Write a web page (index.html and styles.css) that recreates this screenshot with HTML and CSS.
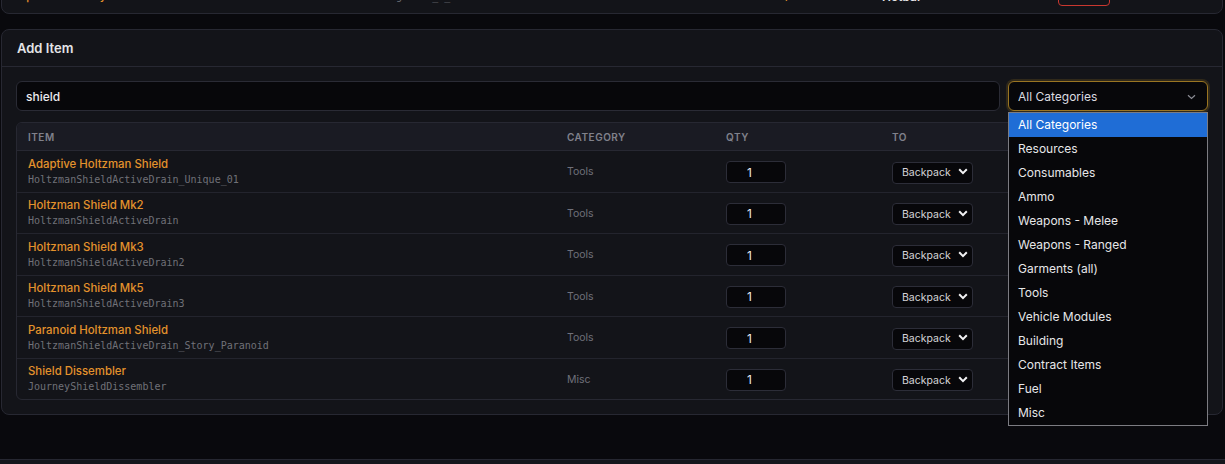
FILE: index.html
```html
<!DOCTYPE html>
<html lang="en">
<head>
    <meta charset="UTF-8">
    <meta name="viewport" content="width=device-width, initial-scale=1.0">
    <title>Inventory Editor</title>
    <link rel="stylesheet" href="styles.css">
</head>
<body>

<div class="page">
    <!-- Previous section (scrolled mostly out of view) -->
    <section class="card prev-card">
        <div class="prev-row">
            <span class="item-name">Improved Battery</span>
            <span class="item-code">RechargePack_M_Standard</span>
            <span class="prev-qty">1</span>
            <span class="prev-slot">Hotbar</span>
            <button class="btn-remove">Remove</button>
        </div>
    </section>

    <section class="card add-card">
        <div class="card-header">Add Item</div>
        <div class="card-body">
            <div class="search-row">
                <input type="text" class="search" value="shield">
                <div class="cat-select">
                    <select class="cat-input">
                        <option>All Categories</option>
                    </select>
                    <svg class="cat-chevron" width="9" height="6" viewBox="0 0 9 6">
                        <path d="M1 1.2l3.5 3.3 3.5-3.3" fill="none" stroke="#8b8c94" stroke-width="1.2"/>
                    </svg>
                    <!-- open dropdown list -->
                    <ul class="cat-list">
                        <li class="selected">All Categories</li>
                        <li>Resources</li>
                        <li>Consumables</li>
                        <li>Ammo</li>
                        <li>Weapons - Melee</li>
                        <li>Weapons - Ranged</li>
                        <li>Garments (all)</li>
                        <li>Tools</li>
                        <li>Vehicle Modules</li>
                        <li>Building</li>
                        <li>Contract Items</li>
                        <li>Fuel</li>
                        <li>Misc</li>
                    </ul>
                </div>
            </div>

            <div class="table-wrap">
                <table class="items">
                    <colgroup>
                        <col class="col-item">
                        <col class="col-cat">
                        <col class="col-qty">
                        <col>
                    </colgroup>
                    <thead>
                        <tr>
                            <th>Item</th>
                            <th>Category</th>
                            <th>Qty</th>
                            <th>To</th>
                        </tr>
                    </thead>
                    <tbody>
                        <tr>
                            <td><div class="item-name">Adaptive Holtzman Shield</div><div class="item-code">HoltzmanShieldActiveDrain_Unique_01</div></td>
                            <td class="cat">Tools</td>
                            <td><input type="text" class="qty" value="1"></td>
                            <td><div class="dest-wrap"><select class="dest"><option>Backpack</option></select><svg class="dest-chevron" width="10" height="7" viewBox="0 0 10 7"><path d="M1.2 1.3l3.8 3.8 3.8-3.8" fill="none" stroke="#f2f2f4" stroke-width="2"/></svg></div></td>
                        </tr>
                        <tr>
                            <td><div class="item-name">Holtzman Shield Mk2</div><div class="item-code">HoltzmanShieldActiveDrain</div></td>
                            <td class="cat">Tools</td>
                            <td><input type="text" class="qty" value="1"></td>
                            <td><div class="dest-wrap"><select class="dest"><option>Backpack</option></select><svg class="dest-chevron" width="10" height="7" viewBox="0 0 10 7"><path d="M1.2 1.3l3.8 3.8 3.8-3.8" fill="none" stroke="#f2f2f4" stroke-width="2"/></svg></div></td>
                        </tr>
                        <tr>
                            <td><div class="item-name">Holtzman Shield Mk3</div><div class="item-code">HoltzmanShieldActiveDrain2</div></td>
                            <td class="cat">Tools</td>
                            <td><input type="text" class="qty" value="1"></td>
                            <td><div class="dest-wrap"><select class="dest"><option>Backpack</option></select><svg class="dest-chevron" width="10" height="7" viewBox="0 0 10 7"><path d="M1.2 1.3l3.8 3.8 3.8-3.8" fill="none" stroke="#f2f2f4" stroke-width="2"/></svg></div></td>
                        </tr>
                        <tr>
                            <td><div class="item-name">Holtzman Shield Mk5</div><div class="item-code">HoltzmanShieldActiveDrain3</div></td>
                            <td class="cat">Tools</td>
                            <td><input type="text" class="qty" value="1"></td>
                            <td><div class="dest-wrap"><select class="dest"><option>Backpack</option></select><svg class="dest-chevron" width="10" height="7" viewBox="0 0 10 7"><path d="M1.2 1.3l3.8 3.8 3.8-3.8" fill="none" stroke="#f2f2f4" stroke-width="2"/></svg></div></td>
                        </tr>
                        <tr>
                            <td><div class="item-name">Paranoid Holtzman Shield</div><div class="item-code">HoltzmanShieldActiveDrain_Story_Paranoid</div></td>
                            <td class="cat">Tools</td>
                            <td><input type="text" class="qty" value="1"></td>
                            <td><div class="dest-wrap"><select class="dest"><option>Backpack</option></select><svg class="dest-chevron" width="10" height="7" viewBox="0 0 10 7"><path d="M1.2 1.3l3.8 3.8 3.8-3.8" fill="none" stroke="#f2f2f4" stroke-width="2"/></svg></div></td>
                        </tr>
                        <tr>
                            <td><div class="item-name">Shield Dissembler</div><div class="item-code">JourneyShieldDissembler</div></td>
                            <td class="cat">Misc</td>
                            <td><input type="text" class="qty" value="1"></td>
                            <td><div class="dest-wrap"><select class="dest"><option>Backpack</option></select><svg class="dest-chevron" width="10" height="7" viewBox="0 0 10 7"><path d="M1.2 1.3l3.8 3.8 3.8-3.8" fill="none" stroke="#f2f2f4" stroke-width="2"/></svg></div></td>
                        </tr>
                    </tbody>
                </table>
            </div>
        </div>
    </section>
</div>

<footer class="status-bar"></footer>

</body>
</html>
```

FILE: styles.css
```css
* {
    box-sizing: border-box;
}
html, body {
    height: 100%;
}
body {
    margin: 0;
    background: #09090d;
    color: #e4e4e7;
    font-family: Inter, "Noto Sans", sans-serif;
    overflow: hidden;
    color-scheme: dark;
}
.page {
    padding: 0 2px 0 1px;
}
.card {
    background: #131419;
    border: 1px solid #272832;
    border-radius: 8px;
}

/* previous section, only its bottom edge is visible */
.prev-card {
    margin-top: -26px;
    height: 40px;
    padding: 11px 11px 0 11px;
}
.prev-row {
    display: grid;
    grid-template-columns: 347px 423px 99px 176px 52px;
    align-items: center;
    height: 20px;
}
.prev-qty {
    color: #e3922c;
    font-size: 12px;
}
.prev-slot {
    color: #e4e4e7;
    font-size: 12px;
    font-weight: 600;
}
.btn-remove {
    height: 20px;
    background: transparent;
    border: 1px solid #c9372f;
    border-radius: 4px;
    color: #ef4444;
    font-family: inherit;
    font-size: 11px;
    padding: 0;
}

.add-card {
    margin-top: 15px;
}
.card-header {
    height: 37px;
    display: flex;
    align-items: center;
    padding: 0 15px;
    border-bottom: 1px solid #272832;
    font-size: 13px;
    font-weight: 600;
    color: #e4e4e7;
}
.card-body {
    padding: 14px;
}

.search-row {
    display: flex;
    gap: 8px;
    margin-bottom: 11px;
}
.search {
    flex: 1;
    height: 30px;
    background: #07070a;
    border: 1px solid #2a2b35;
    border-radius: 6px;
    padding: 0 9px;
    color: #ececef;
    font-family: inherit;
    font-size: 12px;
    font-weight: 500;
    outline: none;
}
.cat-select {
    position: relative;
    width: 200px;
}
.cat-input {
    appearance: none;
    width: 100%;
    height: 30px;
    background: #07070a;
    border: 1px solid #9a7522;
    border-radius: 6px;
    box-shadow: 0 0 0 2px rgba(154, 117, 34, 0.22);
    padding: 0 9px;
    color: #dcdce0;
    font-family: inherit;
    font-size: 12px;
    outline: none;
}
.cat-chevron {
    position: absolute;
    right: 12px;
    top: 13px;
}
.cat-list {
    position: absolute;
    top: 31px;
    left: 0;
    width: 200px;
    margin: 0;
    padding: 0;
    list-style: none;
    background: #07070a;
    border: 1px solid #7c7c82;
    z-index: 10;
}
.cat-list li {
    height: 24px;
    line-height: 24px;
    padding-left: 9px;
    font-size: 12px;
    color: #e6e6e8;
}
.cat-list li.selected {
    background: #1f6dd6;
    color: #fff;
}

.table-wrap {
    border: 1px solid #272832;
    border-radius: 6px;
    overflow: hidden;
}
.items {
    width: 100%;
    border-collapse: separate;
    border-spacing: 0;
    table-layout: fixed;
}
.col-item {
    width: 539px;
}
.col-cat {
    width: 159px;
}
.col-qty {
    width: 166px;
}
.items th {
    height: 28px;
    padding: 0 11px;
    background: #1a1b23;
    border-bottom: 1px solid #272832;
    text-align: left;
    text-transform: uppercase;
    font-size: 10px;
    font-weight: 600;
    letter-spacing: 0.05em;
    color: #80818b;
}
.items td {
    height: 41.5px;
    padding: 1px 11px 0;
    border-bottom: 1px solid #23242d;
    vertical-align: middle;
}
.items tr:last-child td {
    border-bottom: 0;
    height: 40.5px;
}
.item-name {
    font-size: 11.4px;
    font-weight: 500;
    line-height: 15px;
    color: #e3922c;
}
.item-code {
    font-family: "DejaVu Sans Mono", monospace;
    font-size: 10px;
    line-height: 15px;
    color: #707178;
}
.cat {
    font-size: 10.5px;
    color: #6f7079;
}
.qty {
    width: 60px;
    height: 22px;
    background: #07070a;
    border: 1px solid #2c2d38;
    border-radius: 4px;
    padding: 0 0 0 20px;
    color: #ececef;
    font-family: inherit;
    font-size: 12px;
}
.dest-wrap {
    position: relative;
    width: 81px;
}
.dest {
    appearance: none;
    width: 81px;
    height: 22px;
    background: #07070a;
    border: 1px solid #2c2d38;
    border-radius: 4px;
    padding: 0 0 0 9px;
    color: #d4d4d8;
    font-family: inherit;
    font-size: 10.5px;
}
.dest-chevron {
    position: absolute;
    right: 5px;
    top: 8px;
}

.status-bar {
    margin-top: 44px;
    height: 40px;
    background: #15161c;
    border-top: 1px solid #262731;
}
```
